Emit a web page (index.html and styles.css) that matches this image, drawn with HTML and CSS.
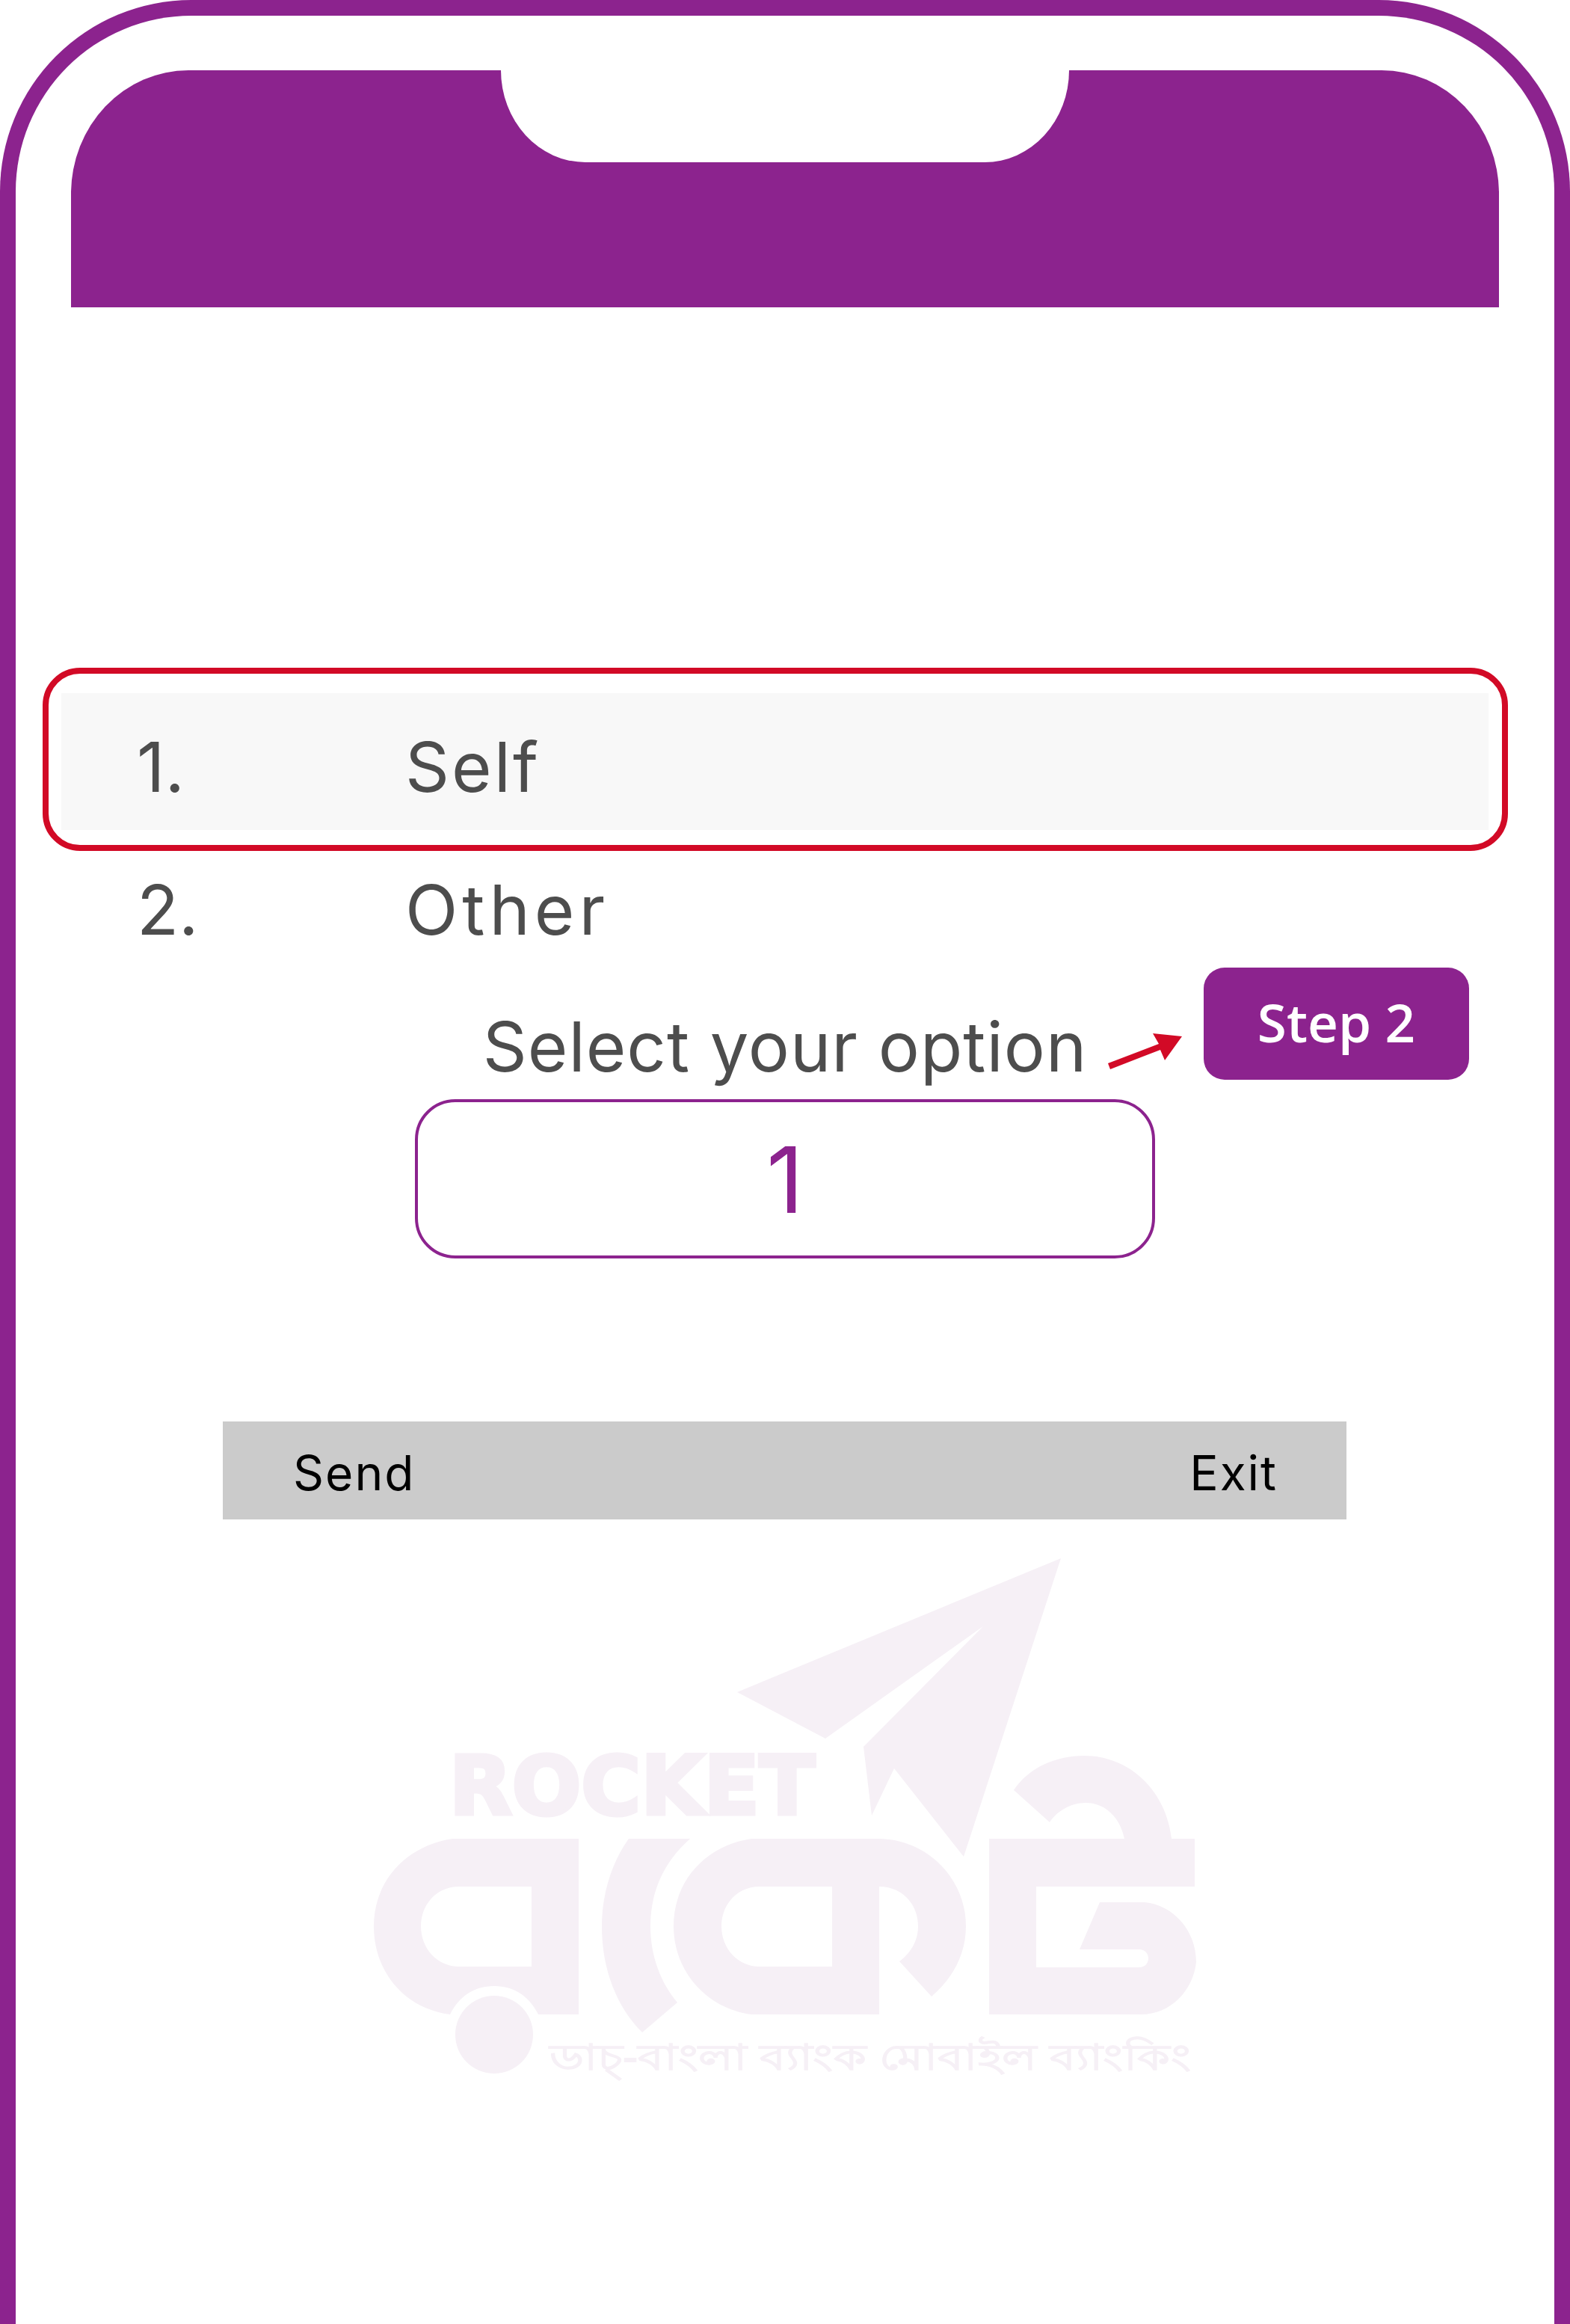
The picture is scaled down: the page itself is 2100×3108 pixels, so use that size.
FILE: index.html
```html
<!DOCTYPE html>
<html lang="en">
<head>
    <meta charset="UTF-8">
    <meta name="viewport" content="width=device-width, initial-scale=1.0">
    <title>Rocket - Select option</title>
    <link rel="stylesheet" href="styles.css">
</head>
<body>
    <div class="phone">
        <div class="top-bar">
            <div class="notch"></div>
        </div>

        <div class="option-highlight">
            <div class="option-row option-row-active">
                <span class="option-num">1.</span>
                <span>Self</span>
            </div>
        </div>
        <div class="option-row option-row-plain">
            <span class="option-num">2.</span>
            <span>Other</span>
        </div>

        <div class="prompt">
            <div class="prompt-label">Select your option</div>
            <div class="prompt-input">1</div>

            <!-- tutorial callout -->
            <svg class="step-arrow" viewBox="0 0 102 50" aria-hidden="true">
                <polygon points="1,40 69,14 61,0 100,4 77,36 71,22 4,48"></polygon>
            </svg>
            <div class="step-badge">Step 2</div>
        </div>

        <div class="action-bar">
            <span>Send</span>
            <span>Exit</span>
        </div>

        <svg class="watermark" viewBox="490 2075 1120 715" role="img" aria-label="Rocket logo">
            <polygon points="1419,2084 986,2263 1104,2325 1315,2175 1155,2336 1166,2428 1196,2365 1289,2483"></polygon>
            <text class="watermark-name" x="601" y="2426" textLength="489" lengthAdjust="spacingAndGlyphs">ROCKET</text>
            <path fill-rule="evenodd" d="M605 2459H774V2694H720C708 2670 688 2656 661 2656C634 2656 614 2670 602 2694C540 2686 500 2636 500 2576C500 2514 545 2468 605 2459ZM614 2523C585 2523 563 2546 563 2576C563 2606 585 2630 614 2630H711V2523Z"></path>
            <circle cx="661" cy="2721" r="52"></circle>
            <path d="M841 2459H923C888 2490 870 2530 870 2576C870 2616 884 2652 906 2678L859 2718C825 2684 805 2634 805 2576C805 2530 820 2488 841 2459Z"></path>
            <path fill-rule="evenodd" d="M1005 2459H1174C1240 2459 1292 2512 1292 2576C1292 2614 1274 2646 1246 2670L1203 2623C1218 2612 1228 2596 1228 2576C1228 2546 1206 2523 1176 2523V2694H1005C945 2686 901 2636 901 2576C901 2514 945 2468 1005 2459ZM1016 2523C987 2523 965 2546 965 2576C965 2606 987 2630 1016 2630H1113V2523Z"></path>
            <path d="M1356 2394C1376 2364 1412 2348 1450 2348C1512 2348 1560 2396 1567 2459H1598V2523H1386V2631H1524C1531 2631 1536 2626 1536 2619C1536 2612 1531 2607 1524 2607H1444L1471 2544H1531C1570 2548 1600 2582 1600 2624C1596 2662 1566 2694 1526 2694H1323V2459H1504C1498 2430 1478 2411 1452 2411C1432 2411 1414 2422 1404 2437Z"></path>
            <text class="watermark-tagline" x="735" y="2768" textLength="858" lengthAdjust="spacingAndGlyphs">ডাচ্-বাংলা ব্যাংক মোবাইল ব্যাংকিং</text>
        </svg>
    </div>
</body>
</html>
```

FILE: styles.css
```css
body {
    font-family: Inter, "Liberation Sans", sans-serif;
    background-color: #fff;
    color: #4d4d4d;
    margin: 0;
    height: 3108px;
    overflow: hidden;
}
.phone {
    box-sizing: border-box;
    width: 2100px;
    height: 3108px;
    padding-top: 73px;
    border: 21px solid #8c238e;
    border-bottom: none;
    border-radius: 256px 256px 0 0;
    background-color: #fff;
}
.top-bar {
    position: relative;
    height: 317px;
    margin: 0 74px;
    background-color: #8c238e;
    border-radius: 157px 157px 0 0 / 165px 165px 0 0;
}
.notch {
    position: absolute;
    top: 0;
    left: 575px;
    width: 760px;
    height: 123px;
    background-color: #fff;
    border-radius: 0 0 113px 113px / 0 0 123px 123px;
}
.option-highlight {
    box-sizing: border-box;
    width: 1960px;
    height: 245px;
    margin: 482px 0 0 36px;
    padding: 26px 18px 20px 17px;
    border: 8px solid #d20a26;
    border-radius: 50px;
}
.option-row {
    box-sizing: border-box;
    display: flex;
    align-items: center;
    font-size: 92px;
    letter-spacing: 3px;
}
.option-row-active {
    height: 183px;
    padding: 14px 0 0 101px;
    background-color: #f8f8f8;
}
.option-row-plain {
    height: 150px;
    margin-left: 162px;
    padding-top: 6px;
    letter-spacing: 6px;
}
.option-num {
    width: 359px;
    letter-spacing: 0;
}
.prompt {
    position: relative;
    width: 990px;
    margin: 40px 0 0 534px;
}
.prompt-label {
    height: 142px;
    line-height: 144px;
    font-size: 92px;
    letter-spacing: 1px;
    text-align: center;
    white-space: nowrap;
}
.prompt-input {
    box-sizing: border-box;
    height: 213px;
    line-height: 208px;
    border: 4px solid #8c238e;
    border-radius: 54px;
    color: #8c238e;
    font-size: 122px;
    text-align: center;
}
.step-arrow {
    position: absolute;
    top: 54px;
    left: 926px;
    width: 102px;
    height: 50px;
    fill: #d20a26;
}
.step-badge {
    position: absolute;
    top: -34px;
    left: 1055px;
    width: 355px;
    height: 150px;
    line-height: 145px;
    border-radius: 28px;
    background-color: #8c238e;
    color: #fff;
    font-family: "Open Sans", sans-serif;
    font-size: 71px;
    font-weight: 600;
    text-align: center;
}
.action-bar {
    box-sizing: border-box;
    display: flex;
    justify-content: space-between;
    align-items: center;
    width: 1503px;
    height: 131px;
    margin: 218px 0 0 277px;
    padding: 6px 92px 0 94px;
    background-color: #cbcbcb;
    color: #000;
    font-size: 64px;
    letter-spacing: 2px;
}
.watermark {
    display: block;
    width: 1120px;
    height: 715px;
    margin: 43px 0 0 469px;
    fill: #f6f0f6;
}
.watermark-name {
    font-family: "DejaVu Sans", sans-serif;
    font-size: 108px;
    font-weight: 700;
    stroke: #f6f0f6;
    stroke-width: 5px;
}
.watermark-tagline {
    font-family: "Noto Sans", "DejaVu Sans", sans-serif;
    font-size: 48px;
    font-weight: 700;
}
```
